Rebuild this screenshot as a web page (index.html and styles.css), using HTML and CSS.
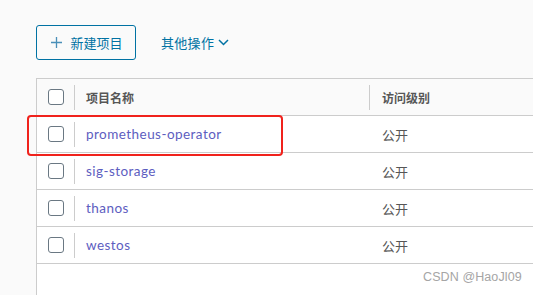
FILE: index.html
```html
<!DOCTYPE html>
<html lang="zh">
<head>
<meta charset="utf-8">
<link rel="stylesheet" href="styles.css">
</head>
<body>
<div class="page">
  <div class="toolbar">
    <button class="btn-outline">
      <svg class="plus" width="11" height="11" viewBox="0 0 11 11"><path d="M5.5 0v11M0 5.5h11" stroke="currentColor" stroke-width="1.3" fill="none"/></svg>
      <span>新建项目</span>
    </button>
    <button class="btn-flat">
      <span>其他操作</span>
      <svg class="chev" width="11" height="7" viewBox="0 0 11 7"><path d="M1 1l4.5 4.5L10 1" stroke="currentColor" stroke-width="1.5" fill="none"/></svg>
    </button>
  </div>
  <div class="grid">
    <div class="row head">
      <div class="cell sel"><span class="cb"></span></div>
      <div class="cell name"><span class="sep"></span>项目名称</div>
      <div class="cell access"><span class="sep"></span>访问级别</div>
    </div>
    <div class="row">
      <div class="cell sel"><span class="cb"></span></div>
      <div class="cell name"><span class="sep"></span><a>prometheus-operator</a></div>
      <div class="cell access">公开</div>
    </div>
    <div class="row">
      <div class="cell sel"><span class="cb"></span></div>
      <div class="cell name"><span class="sep"></span><a>sig-storage</a></div>
      <div class="cell access">公开</div>
    </div>
    <div class="row">
      <div class="cell sel"><span class="cb"></span></div>
      <div class="cell name"><span class="sep"></span><a>thanos</a></div>
      <div class="cell access">公开</div>
    </div>
    <div class="row">
      <div class="cell sel"><span class="cb"></span></div>
      <div class="cell name"><span class="sep"></span><a>westos</a></div>
      <div class="cell access">公开</div>
    </div>
  </div>
  <div class="highlight"></div>
  <div class="watermark">CSDN @HaoJl09</div>
</div>
</body>
</html>
```
FILE: styles.css
```css
html, body {
  margin: 0;
  padding: 0;
}
body {
  background: #fafafa;
  width: 533px;
  height: 295px;
  overflow: hidden;
  font-family: "Noto Sans CJK SC", "Lato", sans-serif;
  color: #565656;
}
.page {
  position: relative;
  height: 295px;
  padding-left: 36px;
  padding-top: 25px;
  box-sizing: border-box;
  display: flex;
  flex-direction: column;
  overflow: hidden;
}
.toolbar {
  display: flex;
  align-items: center;
  height: 35px;
  gap: 24px;
  flex: none;
}
.btn-outline {
  box-sizing: border-box;
  width: 100px;
  height: 35px;
  border: 1px solid #0072a3;
  border-radius: 3px;
  background: transparent;
  color: #0072a3;
  display: flex;
  align-items: center;
  justify-content: center;
  gap: 8px;
  font-family: inherit;
  font-size: 13px;
  padding: 0 0 0 2px;
}
.btn-outline .plus { color: #4a8fb8; }
.btn-flat {
  background: transparent;
  border: 0;
  color: #0072a3;
  font-family: inherit;
  font-size: 13px;
  display: flex;
  align-items: center;
  gap: 4px;
  padding: 0 0 0 1px;
}
.btn-flat span { letter-spacing: 0.3px; }
.grid {
  margin-top: 18px;
  flex: 1;
  border-top: 1px solid #cccccc;
  border-left: 1px solid #cccccc;
  background: #ffffff;
}
.row {
  display: flex;
  height: 37px;
  border-bottom: 1px solid #cccccc;
  box-sizing: border-box;
  align-items: center;
}
.row.head {
  background: #fafafa;
  font-size: 12px;
  font-weight: bold;
  color: #565656;
}
.cell {
  display: flex;
  align-items: center;
  height: 100%;
  position: relative;
}
.sel {
  width: 37px;
  justify-content: center;
  padding-left: 1px;
  box-sizing: border-box;
}
.cb {
  box-sizing: border-box;
  width: 16px;
  height: 16px;
  border: 1px solid #6a7883;
  border-radius: 3px;
  background: #fff;
}
.name {
  width: 295px;
  padding-left: 12px;
  box-sizing: border-box;
}
.access {
  padding-left: 13px;
  font-size: 13px;
}
.head .access { font-size: 12px; }
.sep {
  position: absolute;
  left: 0;
  top: 6px;
  bottom: 5px;
  width: 1px;
  background: #cccccc;
}
.row:not(.head) .access .sep { display: none; }
a {
  color: #5d5dbf;
  font-family: "Lato", sans-serif;
  font-size: 13.5px;
  letter-spacing: 0.45px;
}
.highlight {
  position: absolute;
  left: 27px;
  top: 115px;
  width: 256px;
  height: 41px;
  box-sizing: border-box;
  border: 2px solid #f0221c;
  border-radius: 4px;
}
.watermark {
  position: absolute;
  left: 423px;
  top: 270px;
  font-family: "Liberation Sans", sans-serif;
  font-size: 12.5px;
  color: #a5a5a5;
  letter-spacing: 0.1px;
}
```
